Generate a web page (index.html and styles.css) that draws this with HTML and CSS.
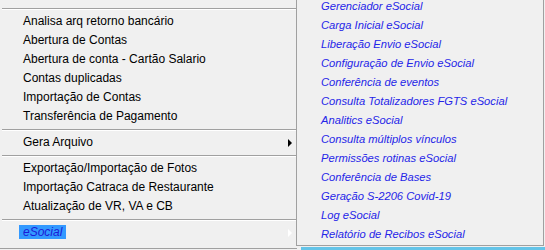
FILE: index.html
```html
<!DOCTYPE html>
<html lang="pt-BR">
<head>
    <meta charset="UTF-8">
    <meta name="viewport" content="width=device-width, initial-scale=1.0">
    <title>Menu eSocial</title>
    <link rel="stylesheet" href="styles.css">
</head>
<body>
    <div class="screen">
        <!-- menu principal -->
        <ul class="menu">
            <li class="item"></li>
            <li class="sep"></li>
            <li class="item">Analisa arq retorno bancário</li>
            <li class="item">Abertura de Contas</li>
            <li class="item">Abertura de conta - Cartão Salario</li>
            <li class="item">Contas duplicadas</li>
            <li class="item">Importação de Contas</li>
            <li class="item">Transferência de Pagamento</li>
            <li class="sep"></li>
            <li class="item has-sub">Gera Arquivo</li>
            <li class="sep"></li>
            <li class="item">Exportação/Importação de Fotos</li>
            <li class="item">Importação Catraca de Restaurante</li>
            <li class="item">Atualização de VR, VA e CB</li>
            <li class="sep"></li>
            <li class="item has-sub open"><span class="hl">eSocial</span></li>
        </ul>

        <div class="side">
            <!-- submenu eSocial -->
            <ul class="submenu">
                <li>Gerenciador eSocial</li>
                <li>Carga Inicial eSocial</li>
                <li>Liberação Envio eSocial</li>
                <li>Configuração de Envio eSocial</li>
                <li>Conferência de eventos</li>
                <li>Consulta Totalizadores FGTS eSocial</li>
                <li>Analitics eSocial</li>
                <li>Consulta múltiplos vínculos</li>
                <li>Permissões rotinas eSocial</li>
                <li>Conferência de Bases</li>
                <li>Geração S-2206 Covid-19</li>
                <li>Log eSocial</li>
                <li>Relatório de Recibos eSocial</li>
            </ul>
            <div class="taskbar"></div>
        </div>
    </div>
</body>
</html>
```

FILE: styles.css
```css
html, body {
    margin: 0;
    background-color: #f0f0f0;
}

body {
    font-family: "Liberation Sans", Arial, sans-serif;
    font-size: 12px;
    color: #000;
}

.screen {
    display: flex;
    width: 545px;
    height: 250px;
    overflow: hidden;
}

/* Menu principal */
.menu {
    list-style: none;
    margin: -14px 0 0 0;
    padding: 0 0 6px 0;
    width: 297px;
    align-self: flex-start;
    border-bottom: 1px solid #a0a0a0;
}

.menu .item {
    height: 19px;
    line-height: 19px;
    padding-left: 23px;
    position: relative;
    white-space: nowrap;
}

.menu .sep {
    height: 7px;
    padding-top: 3px;
    box-sizing: border-box;
}

.menu .sep::before {
    content: "";
    display: block;
    margin-left: 2px;
    border-top: 1px solid #a0a0a0;
    border-bottom: 1px solid #fff;
}

.has-sub::after {
    content: "";
    position: absolute;
    right: 5px;
    top: 6px;
    border-left: 4px solid #000;
    border-top: 4px solid transparent;
    border-bottom: 4px solid transparent;
}

.has-sub.open::after {
    border-left-color: #fff;
}

.hl {
    display: inline-block;
    margin-left: -4px;
    padding: 0 4px;
    height: 14px;
    line-height: 14px;
    background-color: #3399ff;
    color: #1c1cd6;
    font-style: italic;
}

/* Submenu eSocial */
.side {
    width: 249px;
    margin-left: -1px;
    display: flex;
    flex-direction: column;
}

.submenu {
    list-style: none;
    margin: -3px 0 0 0;
    padding: 0 0 1px 0;
    width: 246px;
    background-color: #f0f0f0;
    border-left: 1px solid #a0a0a0;
    border-right: 1px solid #a0a0a0;
    border-bottom: 1px solid #a0a0a0;
}

.submenu li {
    height: 19px;
    line-height: 19px;
    padding-left: 24px;
    font-size: 11.2px;
    font-style: italic;
    color: #2525e8;
    white-space: nowrap;
}

.taskbar {
    flex: 1;
    margin: 1px 0 0 5px;
    background-color: #64c4e8;
}
```
